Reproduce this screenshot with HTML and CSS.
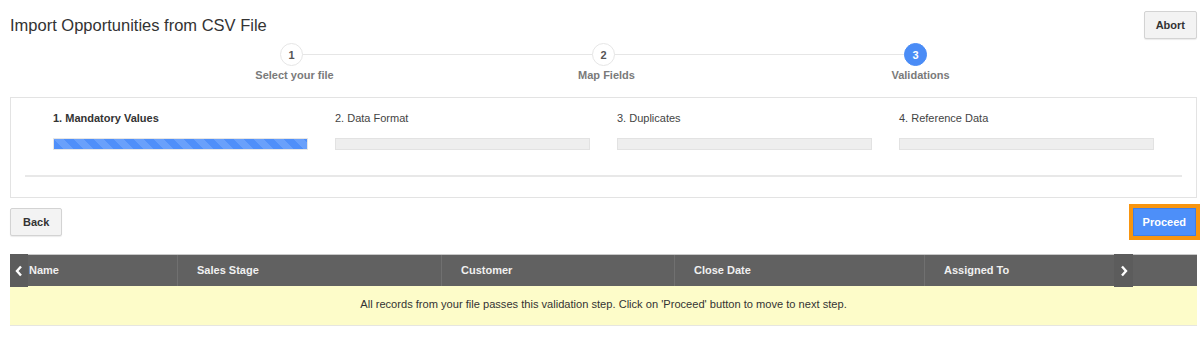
FILE: index.html
```html
<!DOCTYPE html>
<html>
<head>
<meta charset="utf-8">
<link rel="stylesheet" href="styles.css">
</head>
<body>
<div class="top">
  <h1 class="title">Import Opportunities from CSV File</h1>
  <button class="btn">Abort</button>
</div>

<div class="stepper">
  <div class="step"><span class="circle">1</span><span class="step-label">Select your file</span></div>
  <div class="step"><span class="circle">2</span><span class="step-label">Map Fields</span></div>
  <div class="step"><span class="circle active">3</span><span class="step-label">Validations</span></div>
</div>

<div class="panel">
  <div class="checks">
    <div class="check">
      <div class="check-label bold">1. Mandatory Values</div>
      <div class="bar striped"></div>
    </div>
    <div class="check">
      <div class="check-label">2. Data Format</div>
      <div class="bar"></div>
    </div>
    <div class="check">
      <div class="check-label">3. Duplicates</div>
      <div class="bar"></div>
    </div>
    <div class="check">
      <div class="check-label">4. Reference Data</div>
      <div class="bar"></div>
    </div>
  </div>
  <div class="rule"></div>
</div>

<div class="actions">
  <button class="btn btn-wide">Back</button>
  <button class="btn primary">Proceed</button>
</div>

<div class="table">
  <div class="thead">
    <div class="th">Name</div>
    <div class="th">Sales Stage</div>
    <div class="th">Customer</div>
    <div class="th">Close Date</div>
    <div class="th">Assigned To</div>
  </div>
  <span class="nav nav-left"><svg width="8" height="12" viewBox="0 0 8 12"><polyline points="6,1.5 2,6 6,10.5" fill="none" stroke="#fff" stroke-width="2.4"/></svg></span>
  <span class="nav nav-right"><svg width="8" height="12" viewBox="0 0 8 12"><polyline points="2,1.5 6,6 2,10.5" fill="none" stroke="#fff" stroke-width="2.4"/></svg></span>
  <div class="message">All records from your file passes this validation step. Click on 'Proceed' button to move to next step.</div>
</div>
</body>
</html>
```
FILE: styles.css
```css
* { box-sizing: border-box; }
html, body { background: #fff; }
body {
  margin: 0;
  padding: 0 3px 0 10px;
  font-family: "Liberation Sans", Arial, sans-serif;
  color: #333;
}
.top {
  display: flex;
  justify-content: space-between;
  align-items: flex-start;
  padding-top: 11px;
}
.title {
  margin: 4px 0 0;
  font-size: 16.5px;
  line-height: 20px;
  font-weight: normal;
  color: #333;
}
.btn {
  height: 28px;
  padding: 0 11px;
  font-family: inherit;
  font-size: 11px;
  font-weight: bold;
  color: #333;
  background: #f3f3f3;
  border: 1px solid #d3d3d3;
  border-radius: 2px;
  box-shadow: 0 1px 1px rgba(0,0,0,0.08);
}
.btn-wide { padding: 0 12px; }
.stepper {
  position: relative;
  width: 936px;
  margin: 4px auto 0;
  display: grid;
  grid-template-columns: repeat(3, 1fr);
}
.stepper::before {
  content: "";
  position: absolute;
  left: 156px;
  right: 154px;
  top: 11px;
  height: 1px;
  background: #e6e6e6;
}
.step {
  position: relative;
  display: flex;
  flex-direction: column;
  align-items: center;
}
.circle {
  width: 23px;
  height: 23px;
  border-radius: 50%;
  border: 1px solid #e6e6e6;
  background: #fff;
  display: flex;
  align-items: center;
  justify-content: center;
  font-size: 11px;
  font-weight: bold;
  color: #555;
}
.circle.active {
  background: #4a8cf6;
  border-color: #4a8cf6;
  color: #fff;
}
.step-label {
  margin-top: 3px;
  padding-left: 6px;
  font-size: 11px;
  line-height: 13px;
  font-weight: bold;
  color: #7a7a7a;
}
.stepper .step:last-child .step-label { padding-left: 10px; }
.panel {
  margin-top: 15px;
  border: 1px solid #e3e3e3;
  padding: 14px 14px 20px;
}
.checks {
  display: grid;
  grid-template-columns: repeat(4, 255px);
  column-gap: 27px;
  padding-left: 28px;
}
.check-label {
  font-size: 11px;
  line-height: 13px;
  color: #444;
}
.check-label.bold { font-weight: bold; color: #333; }
.bar {
  margin-top: 13px;
  height: 12px;
  background: #eeeeee;
  border: 1px solid #e2e2e2;
}
.bar.striped {
  background-color: #4f8ffa;
  border-color: #e6e6e6;
  background-image: linear-gradient(45deg,
    rgba(255,255,255,0.15) 25%, transparent 25%,
    transparent 50%, rgba(255,255,255,0.15) 50%,
    rgba(255,255,255,0.15) 75%, transparent 75%, transparent);
  background-size: 20px 20px;
}
.rule {
  margin-top: 25px;
  height: 2px;
  background: #e8e8e8;
}
.actions {
  margin-top: 10px;
  display: flex;
  justify-content: space-between;
  align-items: center;
}
.btn.primary {
  margin-right: 1px;
  color: #fff;
  background: #4d8ff9;
  border-color: #3f7fe8;
  border-radius: 0;
  outline: 4px solid #f8950f;
  padding: 0 9px;
}
.table {
  position: relative;
  margin-top: 18px;
}
.thead {
  display: grid;
  grid-template-columns: 167px 264px 233px 250px 1fr;
  background: #616161;
  border-top: 1px solid #c9c9c9;
  height: 32px;
}
.th {
  display: flex;
  align-items: center;
  padding-left: 19px;
  padding-bottom: 1px;
  font-size: 11px;
  font-weight: bold;
  color: #f0f0f0;
  border-left: 1px solid #707070;
}
.th:first-child { border-left: none; }
.nav {
  position: absolute;
  top: 0;
  width: 19px;
  height: 33px;
  background: #5c5c5c;
  display: flex;
  align-items: center;
  justify-content: center;
}
.nav-left { left: 0; width: 18px; }
.nav-right { left: 1104px; }
.message {
  height: 40px;
  background: #fdfcc9;
  border-bottom: 1px solid #e6e6e0;
  display: flex;
  align-items: center;
  justify-content: center;
  font-size: 11.1px;
  color: #333;
  padding-bottom: 3px;
}
```
